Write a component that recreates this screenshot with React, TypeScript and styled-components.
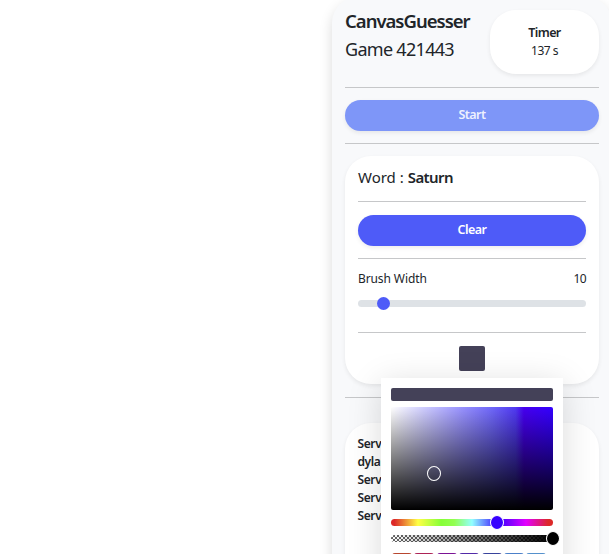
import React from "react";
import styled, { createGlobalStyle } from "styled-components";

const GlobalStyle = createGlobalStyle`
  * { box-sizing: border-box; }
  body {
    margin: 0;
    background: #fff;
    color: #212529;
    font-family: "Noto Sans", "Open Sans", sans-serif;
    overflow: hidden;
  }
`;

const Page = styled.div`
  display: flex;
  justify-content: flex-end;
  width: 609px;
  height: 554px;
  overflow: hidden;
`;

const Panel = styled.aside`
  flex: none;
  width: 280px;
  height: 640px;
  margin: -3px -3px 0 0;
  padding: 13px;
  border-radius: 26px;
  background: #f8f9fb;
  box-shadow: 0 6px 13px rgba(0, 0, 0, 0.15);
`;

const Text = styled.span<{ $size: number; $spacing?: number; $bold?: boolean; $line?: number }>`
  display: block;
  font-size: ${(p) => p.$size}px;
  font-weight: ${(p) => (p.$bold ? 600 : 400)};
  letter-spacing: ${(p) => p.$spacing ?? 0}px;
  line-height: ${(p) => p.$line ?? 18}px;
  white-space: nowrap;
`;

const Header = styled.header`
  display: flex;
  justify-content: space-between;
  height: 77px;
`;

const Card = styled.section`
  border-radius: 26px;
  background: #fff;
  box-shadow: 0 2px 4px rgba(0, 0, 0, 0.075);
`;

const TimerCard = styled(Card)`
  width: 109px;
  height: 64px;
  padding-top: 13px;
  text-align: center;
`;

const Divider = styled.hr`
  height: 1px;
  margin: 0;
  border: 0;
  background: #c6c7c9;
`;

const Button = styled.button<{ $muted?: boolean }>`
  display: block;
  width: 100%;
  height: 31px;
  margin: 12px 0;
  padding: 0 0 1px;
  border: 0;
  border-radius: 16px;
  background: ${(p) => (p.$muted ? "#7e96f8" : "#4e5bf8")};
  color: ${(p) => (p.$muted ? "#eef1fe" : "#fff")};
  font: 600 12.5px/30px "Noto Sans", sans-serif;
  letter-spacing: -0.55px;
  box-shadow: 0 2px 4px rgba(0, 0, 0, 0.075);
`;

const ToolsCard = styled(Card)`
  height: 228px;
  margin: 12px 0 13px;
  padding: 12px 13px 13px;
`;

const Word = styled.div`
  display: flex;
  gap: 4px;
  height: 33px;
`;

const ToolButton = styled(Button)`
  margin: 13px 0 12px;
`;

const BrushRow = styled.div`
  display: flex;
  justify-content: space-between;
  padding-top: 11px;
  height: 41px;
`;

const Slider = styled.div`
  display: flex;
  align-items: center;
  height: 7px;
  margin-bottom: 25px;
  padding-left: 19px;
  border-radius: 4px;
  background: #dee2e6;
`;

const SliderThumb = styled.div`
  width: 13px;
  height: 13px;
  border-radius: 50%;
  background: #4e5bf8;
`;

const PickerAnchor = styled.div`
  position: relative;
  width: 26px;
  margin: 13px auto 0;
`;

const ColorChip = styled.div`
  height: 25px;
  border-radius: 2px;
  background: #444158;
`;

const Picker = styled.div`
  position: absolute;
  z-index: 2;
  top: 32px;
  left: -78px;
  width: 182px;
  height: 230px;
  padding: 10px;
  background: #fff;
  box-shadow: 0 6px 32px rgba(0, 0, 0, 0.15);
`;

const Preview = styled.div`
  height: 13px;
  margin-bottom: 6px;
  border-radius: 2px;
  background: #444158;
`;

const Saturation = styled.div`
  position: relative;
  height: 103px;
  margin-bottom: 9px;
  border-radius: 2px;
  background:
    linear-gradient(to bottom, transparent, #000),
    linear-gradient(to right, #fff 0%, #cfcdff 20%, #9a94ff 43%, #7068fa 62%, #5039f2 77%, #4600f0 82%, #3300ff 100%);
`;

const Ring = styled.div`
  position: absolute;
  left: 36px;
  top: 59px;
  width: 14px;
  height: 15px;
  border: 1px solid #fff;
  border-radius: 50%;
`;

const Track = styled.div<{ $alpha?: boolean }>`
  position: relative;
  height: 7px;
  margin-bottom: 9px;
  border-radius: 4px;
  background: ${(p) =>
    p.$alpha
      ? "linear-gradient(to right, transparent, #000), repeating-conic-gradient(#666 0 25%, #fff 0 50%) 0 0 / 4px 4px"
      : "linear-gradient(to right, #dc2828 0%, #dc2828 2%, #ffff46 16.6%, #86ff37 31%, #92ff50 39%, #92ffff 50%, #3700ff 66.6%, #e200ff 83.3%, #dc2828 97%)"};
`;

const Knob = styled.div<{ $x: number; $color: string }>`
  position: absolute;
  left: ${(p) => p.$x}px;
  top: -4px;
  width: 14px;
  height: 15px;
  border: 1px solid #fff;
  border-radius: 50%;
  background: ${(p) => p.$color};
`;

const Swatches = styled.div`
  display: flex;
  gap: 2.4px;
  padding: 2px 0 0 1px;
`;

const Swatch = styled.div<{ $color: string }>`
  width: 20px;
  height: 20px;
  border-radius: 3px;
  background: ${(p) => p.$color};
`;

const LogCard = styled(Card)`
  height: 220px;
  margin-top: 25px;
  padding: 12px 12.5px;
`;

const swatches = ["#b8462f", "#ad2356", "#7b1395", "#522aa8", "#38439c", "#4c80c9", "#5591cc"];
const messages = ["Server :", "dylan :", "Server :", "Server :", "Server :"];

export default function App() {
  return (
    <>
      <GlobalStyle />
      <Page>
        <Panel>
          <Header>
            <div>
              <Text $size={18.5} $bold $spacing={-1} $line={21}>CanvasGuesser</Text>
              <Text $size={18} $spacing={-0.7} $line={36}>Game 421443</Text>
            </div>
            <TimerCard>
              <Text $size={12.5} $bold $spacing={-0.6} $line={19}>Timer</Text>
              <Text $size={12} $spacing={-0.5}>137 s</Text>
            </TimerCard>
          </Header>
          <Divider />
          <Button $muted disabled>Start</Button>
          <Divider />
          <ToolsCard>
            <Word>
              <Text $size={15}>Word :</Text>
              <Text $size={15} $bold $spacing={-0.6}>Saturn</Text>
            </Word>
            <Divider />
            <ToolButton>Clear</ToolButton>
            <Divider />
            <BrushRow>
              <Text $size={12} $spacing={-0.1}>Brush Width</Text>
              <Text $size={12} $spacing={-0.6}>10</Text>
            </BrushRow>
            <Slider><SliderThumb /></Slider>
            <Divider />
            <PickerAnchor>
              <ColorChip />
              <Picker>
                <Preview />
                <Saturation><Ring /></Saturation>
                <Track><Knob $x={99} $color="#3700ff" /></Track>
                <Track $alpha><Knob $x={155} $color="#000" /></Track>
                <Swatches>
                  {swatches.map((color) => <Swatch key={color} $color={color} />)}
                </Swatches>
              </Picker>
            </PickerAnchor>
          </ToolsCard>
          <Divider />
          <LogCard>
            {messages.map((message, i) => (
              <Text key={i} $size={12} $bold $spacing={-0.4}>{message}</Text>
            ))}
          </LogCard>
        </Panel>
      </Page>
    </>
  );
}
